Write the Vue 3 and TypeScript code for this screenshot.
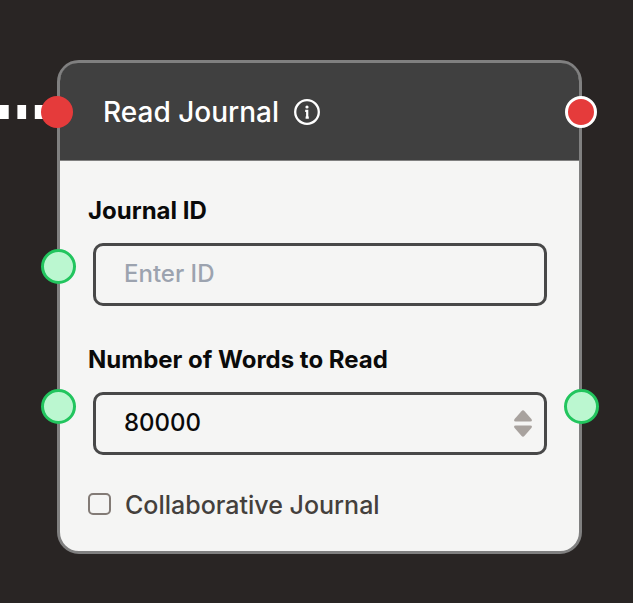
<script setup lang="ts">
import { ref } from 'vue'

const journalId = ref<string>('')
const wordCount = ref<number>(80000)
const collaborative = ref<boolean>(false)

function step(amount: number): void {
  wordCount.value = Math.max(0, Number(wordCount.value) + amount)
}
</script>

<template>
  <main class="canvas">
    <article class="node">
      <header class="node-header">
        <h1 class="title">Read Journal</h1>
        <button class="info" type="button" aria-label="About this node">
          <svg viewBox="0 0 26 26" width="26" height="26" aria-hidden="true">
            <circle cx="13" cy="13" r="11.8" fill="none" stroke="currentColor" stroke-width="2.3" />
            <circle cx="13" cy="8" r="1.6" fill="currentColor" />
            <path d="M11.2 11.8H13.2V18.6M11.6 18.6H14.8" fill="none" stroke="currentColor" stroke-width="2.2" />
          </svg>
        </button>
      </header>

      <form class="node-body" @submit.prevent>
        <div class="field">
          <label class="label" for="journal-id">Journal ID</label>
          <div class="control">
            <input id="journal-id" v-model="journalId" class="input" type="text" placeholder="Enter ID" />
          </div>
        </div>

        <div class="field">
          <label class="label" for="word-count">Number of Words to Read</label>
          <div class="control">
            <input id="word-count" v-model="wordCount" class="input" type="number" />
            <div class="stepper">
              <button type="button" class="step" aria-label="Increase" @click="step(1)">
                <svg viewBox="0 0 18 12" width="18" height="12" aria-hidden="true">
                  <path d="M7.4 1.2Q9-.6 10.6 1.2L17.4 9Q18.8 11.4 16.4 11.6H1.6Q-.8 11.4.6 9Z" />
                </svg>
              </button>
              <button type="button" class="step" aria-label="Decrease" @click="step(-1)">
                <svg viewBox="0 0 18 12" width="18" height="12" aria-hidden="true">
                  <path d="M7.4 10.8Q9 12.6 10.6 10.8L17.4 3Q18.8.6 16.4.4H1.6Q-.8.6.6 3Z" />
                </svg>
              </button>
            </div>
          </div>
        </div>

        <label class="check">
          <input v-model="collaborative" class="checkbox" type="checkbox" />
          <span class="check-text">Collaborative Journal</span>
        </label>
      </form>

      <svg class="edge" viewBox="0 0 58 14" width="58" height="14" aria-hidden="true">
        <path d="M0 7H58" stroke="#fff" stroke-width="14" stroke-dasharray="8.7 8.7" />
      </svg>
      <span class="port flow flow-in"></span>
      <span class="port flow flow-out"></span>
      <span class="port data id-in"></span>
      <span class="port data count-in"></span>
      <span class="port data count-out"></span>
    </article>
  </main>
</template>

<style>
body {
  background: #292524;
}
</style>

<style scoped>
.canvas {
  box-sizing: border-box;
  min-height: 100vh;
  padding: 60px 51px 48px 57px;
  overflow: hidden;
  background: #292524;
  font-family: Inter, "Liberation Sans", sans-serif;
  font-size: 24px;
  line-height: 32px;
}

.node {
  position: relative;
  border: 3px solid #808080;
  border-radius: 22px;
  background: #f5f5f4;
}

.node-header {
  display: flex;
  align-items: center;
  gap: 15px;
  height: 97px;
  padding: 0 43px;
  border-bottom: 1px solid #808080;
  border-radius: 18px 18px 0 0;
  background: #404040;
  color: #fff;
}

.title {
  margin: 0;
  font-size: 28px;
  font-weight: 500;
}

.info {
  display: flex;
  padding: 0;
  border: 0;
  background: none;
  color: #fff;
}

.node-body {
  display: flex;
  flex-direction: column;
  gap: 38px;
  padding: 34px 32px 30px 28px;
}

.field {
  display: flex;
  flex-direction: column;
  gap: 16px;
}

.label {
  color: #0a0a0a;
  font-weight: 700;
}

.control {
  position: relative;
  margin-left: 5px;
}

.input {
  display: block;
  box-sizing: border-box;
  width: 100%;
  height: 63px;
  padding: 0 28px 2px;
  border: 3px solid #484848;
  border-radius: 10px;
  background: transparent;
  color: #0a0a0a;
  font: inherit;
  font-weight: 500;
  appearance: textfield;
}

.input::placeholder {
  color: #9ca3af;
  opacity: 1;
}

.input::-webkit-inner-spin-button {
  appearance: none;
}

.stepper {
  position: absolute;
  top: 0;
  right: 15px;
  bottom: 0;
  display: flex;
  flex-direction: column;
  justify-content: center;
  gap: 3px;
}

.step {
  display: flex;
  padding: 0;
  border: 0;
  background: none;
}

.step path {
  fill: #a8a29e;
}

.check {
  display: flex;
  align-items: center;
  gap: 14px;
  margin-top: -6px;
  color: #44403c;
  font-size: 25px;
  font-weight: 500;
}

.check-text {
  padding-top: 2px;
}

.checkbox {
  box-sizing: border-box;
  width: 23px;
  height: 22px;
  margin: 0;
  border: 2px solid #837b76;
  border-radius: 5px;
  background: transparent;
  appearance: none;
}

.checkbox:checked {
  background: #44403c;
}

.edge {
  position: absolute;
  top: 42px;
  left: -60px;
}

.port {
  position: absolute;
  box-sizing: border-box;
  border-radius: 50%;
}

.flow {
  top: 33px;
  width: 32px;
  height: 32px;
  background: #e53b3b;
}

.flow-in {
  left: -19px;
}

.flow-out {
  right: -18px;
  border: 3px solid #fff;
}

.data {
  width: 35px;
  height: 35px;
  border: 3px solid #22c55e;
  background: #bbf7d0;
}

.id-in {
  top: 186px;
  left: -19px;
}

.count-in {
  top: 326px;
  left: -19px;
}

.count-out {
  top: 326px;
  right: -20px;
}
</style>
